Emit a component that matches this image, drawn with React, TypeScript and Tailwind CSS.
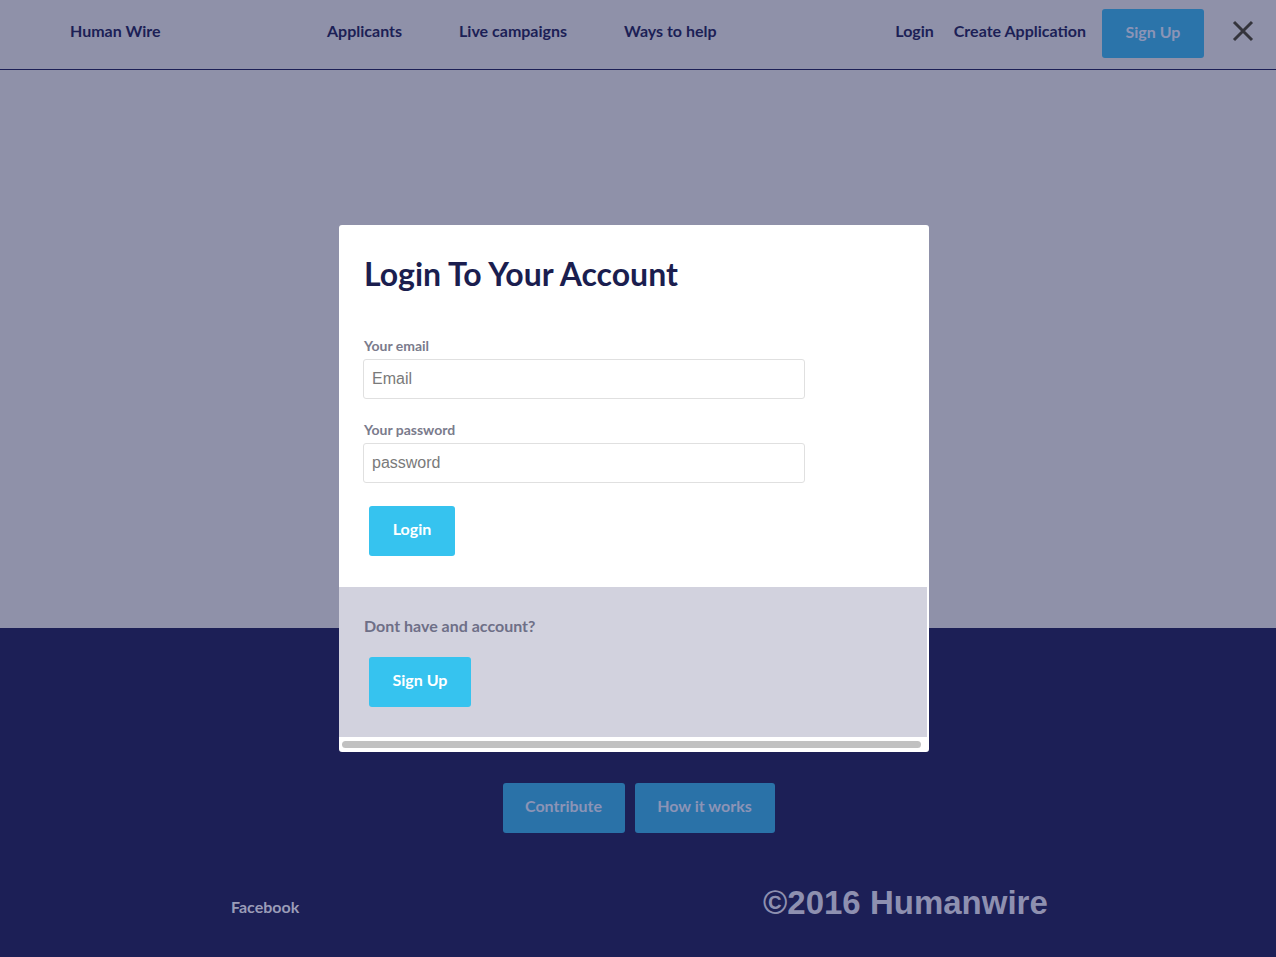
import React from "react";

export default function App() {
  const font = { fontFamily: "Lato, 'Open Sans', sans-serif" };
  const arial = { fontFamily: "'Liberation Sans', Arial, sans-serif" };
  return (
    <div className="relative w-[1276px] h-[957px] overflow-hidden" style={font}>
      {/* top area (dimmed) */}
      <div className="h-[628px] bg-[#8f91a9] flex flex-col">
        <header className="h-[70px] border-b border-[#1c1f56] flex items-start text-[16px] leading-[24px] font-bold text-[#1c1f56]">
          <div className="pl-[70px] w-[327px] pt-[19px]">Human Wire</div>
          <nav className="flex gap-[57px] pt-[19px]">
            <span>Applicants</span>
            <span>Live campaigns</span>
            <span>Ways to help</span>
          </nav>
          <div className="ml-auto flex items-start">
            <span className="mr-[20px] pt-[19px]">Login</span>
            <span className="mr-[16px] pt-[19px]">Create Application</span>
            <div className="mt-[9px] w-[102px] h-[49px] pb-[4px] bg-[#2b74aa] rounded-[3px] flex items-center justify-center text-[#8c94b6]">
              Sign Up
            </div>
            <div className="w-[72px] pt-[20px] pl-[6px] flex justify-center">
              <svg width="22" height="22" viewBox="0 0 22 22">
                <path d="M2 2 L20 20 M20 2 L2 20" stroke="#34343c" strokeWidth="3" />
              </svg>
            </div>
          </div>
        </header>
      </div>

      {/* bottom navy area */}
      <div className="h-[329px] bg-[#1c1f56] flex flex-col items-center">
        <div className="mt-[155px] flex gap-[10px] pl-[1px]">
          <div className="w-[122px] h-[50px] pb-[5px] bg-[#2a72a8] rounded-[3px] flex items-center justify-center text-[16px] font-bold text-[#8c94b6]">
            Contribute
          </div>
          <div className="w-[140px] h-[50px] pb-[5px] bg-[#2a72a8] rounded-[3px] flex items-center justify-center text-[16px] font-bold text-[#8c94b6]">
            How it works
          </div>
        </div>
        <div className="w-full flex items-start mt-[53px]">
          <div className="pl-[231px] w-[763px] mt-[11px] text-[16px] leading-[20px] font-bold text-[#9a9cb8]">Facebook</div>
          <div className="text-[33px] font-bold text-[#8e90b0] leading-none" style={arial}>
            ©2016 Humanwire
          </div>
        </div>
      </div>

      {/* modal */}
      <div className="absolute left-[339px] top-[225px] w-[590px] bg-white rounded-[3px] flex flex-col overflow-hidden">
        <div className="px-[24px] pt-[31px] pb-[31px]">
          <h1 className="ml-[1px] text-[32px] font-bold text-[#1b1e4f] leading-[36px]">Login To Your Account</h1>
          <div className="ml-[1px] mt-[45px] text-[14px] leading-[17px] font-bold text-[#7a7b8c]">Your email</div>
          <div className="mt-[5px] w-[442px] h-[40px] border border-[#e0e0e0] rounded-[3px] flex items-center px-[8px] text-[16px] text-[#7a7a7a]" style={arial}>
            Email
          </div>
          <div className="ml-[1px] mt-[22px] text-[14px] leading-[17px] font-bold text-[#7a7b8c]">Your password</div>
          <div className="mt-[5px] w-[442px] h-[40px] border border-[#e0e0e0] rounded-[3px] flex items-center px-[8px] text-[16px] text-[#7a7a7a]" style={arial}>
            password
          </div>
          <div className="mt-[23px] ml-[6px] w-[86px] h-[50px] pb-[4px] bg-[#36c3ef] rounded-[3px] flex items-center justify-center text-[16px] font-bold text-white">
            Login
          </div>
        </div>
        <div className="bg-[#d2d2de] h-[150px] px-[25px] pt-[29px] mr-[2px]">
          <div className="text-[16px] leading-[20px] font-bold text-[#6e6f87]">Dont have and account?</div>
          <div className="mt-[21px] ml-[5px] w-[102px] h-[50px] pb-[4px] bg-[#36c3ef] rounded-[3px] flex items-center justify-center text-[16px] font-bold text-white">
            Sign Up
          </div>
        </div>
        <div className="h-[15px] px-[3px] pt-[4px]">
          <div className="h-[7px] rounded-full bg-[#c1c1c1] mr-[5px]" />
        </div>
      </div>
    </div>
  );
}
